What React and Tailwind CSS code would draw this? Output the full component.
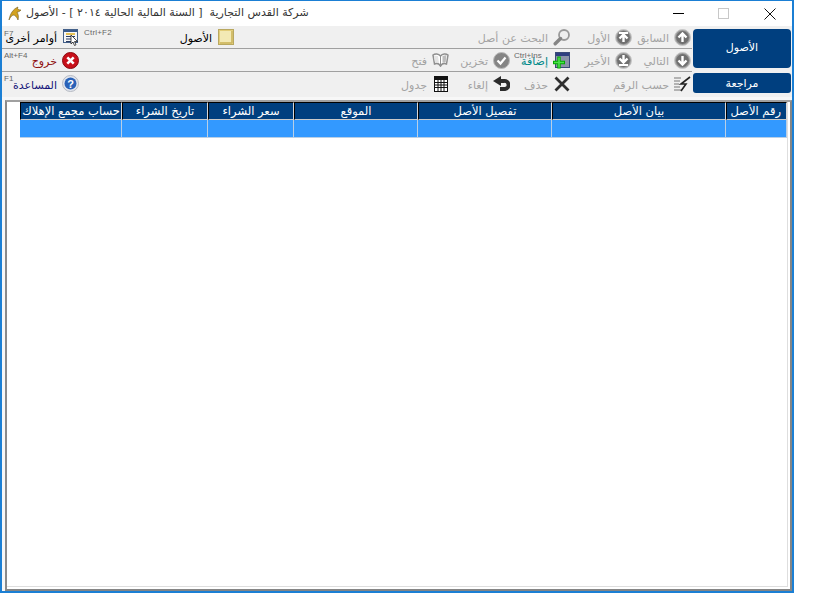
import React from "react";

const FONT = "font-['DejaVu_Sans','Noto_Sans',sans-serif]";

// gray round button with a white arrow, used by the record navigation
const NavIcon = ({ d, bar }) => (
  <svg width="17" height="17" viewBox="0 0 17 17">
    <circle cx="8.5" cy="8.5" r="8" fill="#9a9a9a" stroke="#c9c9c9" />
    <circle cx="8.5" cy="8.5" r="6.4" fill="#6f6f6f" />
    <path d={d} fill="none" stroke="#fff" strokeWidth="2.4" />
    {bar && <path d={bar} stroke="#fff" strokeWidth="2" />}
  </svg>
);

const Folder = () => (
  <svg width="16" height="16" viewBox="0 0 16 16">
    <rect x="0.5" y="0.5" width="15" height="15" fill="#e3cd78" stroke="#b9a860" />
    <rect x="2" y="2" width="11" height="11" fill="#f3e9b4" />
    <path d="M2 14h12M14 2v12" stroke="#c2ae5c" />
  </svg>
);

const Commands = () => (
  <svg width="16" height="17" viewBox="0 0 16 17">
    <rect x="0.5" y="0.5" width="14" height="13" fill="#f6f6f6" stroke="#44618a" />
    <rect x="1" y="1" width="13" height="2" fill="#3a5b8c" />
    <path d="M3 5h9" stroke="#e0b020" strokeWidth="1.5" />
    <path d="M3 7.5h9M3 10h9M3 12.500h6" stroke="#2b3d63" />
    <path d="M8 6l0 9 2-2 1.500 3.500 1.500-.7-1.500-3.300h3z" fill="#fff" stroke="#222" strokeWidth="0.8" />
  </svg>
);

const Search = () => (
  <svg width="17" height="17" viewBox="0 0 17 17">
    <circle cx="11" cy="6" r="5" fill="#efefef" stroke="#9a9a9a" strokeWidth="1.800" />
    <path d="M7.500 9.500L2.200 14.800" stroke="#858585" strokeWidth="3.400" strokeLinecap="round" />
  </svg>
);

const AddIcon = () => (
  <svg width="17" height="17" viewBox="0 0 17 17">
    <rect x="2.500" y="0.500" width="14" height="15" fill="#8b93a8" stroke="#3a4a78" />
    <rect x="3" y="1" width="13" height="3" fill="#2f3f80" />
    <path d="M0 10.500h12M6 4.500v12" stroke="#0a0" strokeWidth="3.400" />
    <path d="M1 10.500h10M6 5.500v10" stroke="#4ee04e" strokeWidth="1.600" />
  </svg>
);

const SaveIcon = () => (
  <svg width="17" height="17" viewBox="0 0 17 17">
    <circle cx="8.500" cy="8.500" r="8" fill="#858585" stroke="#bbb" />
    <path d="M4.500 8.500l3 3 5-6" fill="none" stroke="#fff" strokeWidth="2.200" />
  </svg>
);

const BookIcon = () => (
  <svg width="17" height="14" viewBox="0 0 17 14">
    <path d="M8.500 3C6.500 0.500 3 0.500 1 2l1.500 9c2-1 4.500-.5 6 2 1.500-2.500 4-3 6-2L16 2C14 0.500 10.500 0.500 8.500 3z" fill="#fff" stroke="#8f8f8f" strokeWidth="1.500" />
    <path d="M8.500 3v10" stroke="#8f8f8f" />
    <path d="M10.500 3l4-1-.8 7-3.200.8z" fill="#bcbcbc" />
    <path d="M2 2.500l4 .5 1 7-4-.8z" fill="#e4e4e4" />
  </svg>
);

const ExitIcon = () => (
  <svg width="17" height="17" viewBox="0 0 17 17">
    <circle cx="8.500" cy="8.500" r="8" fill="#c8101a" stroke="#8a0a10" />
    <path d="M5.300 5.300l6.400 6.400M11.700 5.300l-6.400 6.400" stroke="#fff" strokeWidth="2.600" />
  </svg>
);

const SortIcon = () => (
  <svg width="17" height="16" viewBox="0 0 17 16">
    <path d="M0 2h7M0 5h6M0 8h5M0 11h6M0 14h7" stroke="#777" />
    <path d="M16 1L7 8h5L7 15" fill="none" stroke="#222" strokeWidth="1.600" />
  </svg>
);

const DeleteIcon = () => (
  <svg width="16" height="16" viewBox="0 0 16 16">
    <path d="M1.500 1.500l13 13M14.500 1.500l-13 13" stroke="#2f2f2f" strokeWidth="2.800" />
  </svg>
);

const UndoIcon = () => (
  <svg width="17" height="16" viewBox="0 0 17 16">
    <path d="M7 5h4a4 4 0 0 1 1 8H7" fill="none" stroke="#2b2b2b" strokeWidth="3.800" />
    <path d="M8 0v10L0 5z" fill="#2b2b2b" />
  </svg>
);

const GridIcon = () => (
  <svg width="14" height="16" viewBox="0 0 14 16">
    <rect x="0.500" y="0.500" width="13" height="15" fill="#fff" stroke="#111" />
    <rect x="1" y="1" width="12" height="3" fill="#111" />
    <path d="M1 6.500h12M1 9h12M1 11.500h12M4 4v11M7 4v11M10 4v11" stroke="#111" />
  </svg>
);

const HelpIcon = () => (
  <svg width="17" height="17" viewBox="0 0 17 17">
    <circle cx="8.500" cy="8.500" r="8" fill="#e2e6ee" stroke="#b5b9c2" />
    <circle cx="8.500" cy="8.500" r="6" fill="#2a62b8" />
    <text x="8.500" y="12.500" textAnchor="middle" fontSize="11" fontWeight="700" fill="#fff" fontFamily="Liberation Sans">?</text>
  </svg>
);

// a cell that keeps its icon flush to the right edge and lets the label run left
const Tool = ({ icon, label, color = "text-[#a3a3a3]" }) => (
  <div className="flex items-center justify-end gap-[5px] min-w-0">
    <span className={`pt-[3px] text-[11px] leading-none whitespace-nowrap ${color}`} dir="rtl">{label}</span>
    <span className="flex w-[17px] shrink-0 justify-center">{icon}</span>
  </div>
);

const Hint = ({ children, className }) => (
  <span className={`absolute text-[8px] leading-none text-[#666] font-['Liberation_Sans',sans-serif] ${className}`}>{children}</span>
);

const ToolRow = ({ children, border = true }) => (
  <div className={`relative grid h-[23px] grid-cols-[77px_155px_215px_61px_60px_62px_59px] items-center ${border ? "border-b border-[#a0a0a0]" : ""}`}>
    {children}
  </div>
);

const columns = [
  { title: "رقم الأصل", w: "w-[61px]", align: "text-right pr-[5px]" },
  { title: "بيان الأصل", w: "w-[174px]" },
  { title: "تفصيل الأصل", w: "w-[134px]" },
  { title: "الموقع", w: "w-[124px]" },
  { title: "سعر الشراء", w: "w-[86px]" },
  { title: "تاريخ الشراء", w: "w-[86px]" },
  { title: "حساب مجمع الإهلاك", w: "w-[102px]" },
];

export default function App() {
  return (
    <div className={`h-[593px] w-[819px] bg-white ${FONT}`}>
      <div className="flex h-[593px] w-[794px] flex-col border-x-[2px] border-t border-b-[2px] border-[#1b7fd4] bg-white">
        {/* title bar */}
        <div className="flex h-[25px] shrink-0 items-center bg-white">
          <svg className="ml-[5px]" width="16" height="15" viewBox="0 0 16 15">
            <path d="M2 14C3 8 6 3 11 1c-1 2 0 3 3 3-1 1-2 2-4 2 1 2 2 4 1 8-1-3-3-5-5-5-2 1-3 3-4 5z" fill="#d3a21f" stroke="#6e5a1e" strokeWidth="0.600" />
          </svg>
          <span className="ml-[3px] text-[11px] text-[#333] whitespace-nowrap" dir="rtl">
            شركة القدس التجارية &nbsp;[ السنة المالية الحالية ٢٠١٤ ] - الأصول
          </span>
          <div className="ml-auto flex items-center">
            <span className="h-px w-[11px] bg-black" />
            <span className="ml-[34px] h-[11px] w-[11px] border border-[#c8c8c8]" />
            <svg className="ml-[35px] mr-[16px]" width="12" height="12" viewBox="0 0 12 12">
              <path d="M0.500 0.500l11 11M11.500 0.500l-11 11" stroke="#111" />
            </svg>
          </div>
        </div>

        {/* toolbar */}
        <div className="flex h-[71px] shrink-0 bg-[#f0f0f0]">
          <div className="w-[690px] shrink-0">
            <ToolRow>
              <Hint className="left-[2px] top-[4px] text-[#444]">F7</Hint>
              <Hint className="left-[82px] top-[3px] tracking-[0.200px]">Ctrl+F2</Hint>
              <Tool icon={<Commands />} label="أوامر أخرى" color="text-black" />
              <Tool icon={<Folder />} label="الأصول" color="text-black" />
              <div />
              <div />
              <Tool icon={<Search />} label="البحث عن أصل" />
              <Tool icon={<NavIcon d="M4.500 9.500l4-4 4 4M8.500 6v7" bar="M4 4h9" />} label="الأول" />
              <Tool icon={<NavIcon d="M4.500 8.500l4-4 4 4M8.500 5v8" />} label="السابق" />
            </ToolRow>
            <ToolRow>
              <Hint className="left-[2px] top-[3px]">Alt+F4</Hint>
              <Hint className="left-[512px] top-[3px] text-[7px] text-[#333]">Ctrl+Ins</Hint>
              <Tool icon={<ExitIcon />} label="خروج" color="text-[#8f1010]" />
              <div />
              <Tool icon={<BookIcon />} label="فتح" />
              <Tool icon={<SaveIcon />} label="تخزين" />
              <Tool icon={<AddIcon />} label="إضافة" color="text-[#008a8a]" />
              <Tool icon={<NavIcon d="M4.500 6.500l4 4 4-4M8.500 3v7" bar="M4 13h9" />} label="الأخير" />
              <Tool icon={<NavIcon d="M4.500 8.500l4 4 4-4M8.500 4v8" />} label="التالي" />
            </ToolRow>
            <ToolRow border={false}>
              <Hint className="left-[2px] top-[3px] text-[#444]">F1</Hint>
              <Tool icon={<HelpIcon />} label="المساعدة" color="text-[#15157a]" />
              <div />
              <Tool icon={<GridIcon />} label="جدول" />
              <Tool icon={<UndoIcon />} label="إلغاء" />
              <Tool icon={<DeleteIcon />} label="حذف" />
              <div />
              <Tool icon={<SortIcon />} label="حسب الرقم" />
            </ToolRow>
          </div>

          {/* section buttons */}
          <div className="ml-[1px] flex w-[98px] shrink-0 flex-col gap-[5px] bg-[#f0f0f0] pt-[3px]">
            <button className="h-[39px] rounded-[4px] bg-[#003f7f] text-[11px] text-white">الأصول</button>
            <button className="h-[20px] rounded-[3px] bg-[#003f7f] text-[11px] leading-none text-white">مراجعة</button>
          </div>
        </div>

        {/* records table */}
        <div className="flex min-h-0 flex-1 flex-col bg-[#f7f7f7] pt-[3px]">
          <div className="ml-[3px] min-h-0 flex-1 border-t-[2px] border-l-[2px] border-r-[2px] border-b-[2px] border-t-[#a0a0a0] border-l-[#8a8a8a] border-r-[#858585] border-b-[#858585] bg-white pr-[2px] pb-[2px]">
            <div className="h-full border-r border-b border-[#dedede]">
              <div className="flex flex-row-reverse" dir="ltr">
                {columns.map((col) => (
                  <div key={col.title} className={`${col.w} shrink-0`}>
                    <div className={`h-[18px] border border-black border-b-[#c9c9c9] border-r-[#d8d8d8] bg-[#003f7f] text-center text-[11.500px] leading-[17px] text-white whitespace-nowrap overflow-hidden ${col.align || ""}`} dir="rtl">
                      {col.title}
                    </div>
                    <div className="h-[18px] border-b border-r border-[#b9cfe6] bg-[#3399ff]" />
                  </div>
                ))}
              </div>
            </div>
          </div>
        </div>
      </div>
    </div>
  );
}
